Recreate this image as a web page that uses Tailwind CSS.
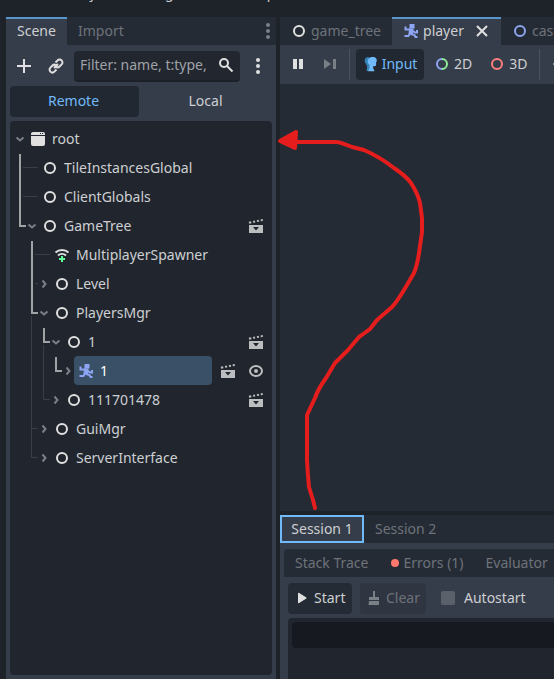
<!DOCTYPE html>
<html lang="en">
<head>
<meta charset="utf-8">
<title>Scene editor</title>
<script src="https://cdn.jsdelivr.net/npm/@tailwindcss/browser@4"></script>
</head>
<body class="relative flex h-screen flex-col overflow-hidden bg-[#1e2229] font-['Noto_Sans',sans-serif] text-sm leading-5 text-[#cdcfd2]">
<svg width="0" height="0" class="absolute" aria-hidden="true">
  <defs>
    <symbol id="node" viewBox="0 0 16 16"><circle cx="8" cy="8" r="5" fill="none" stroke="currentColor" stroke-width="2"/></symbol>
    <symbol id="down" viewBox="0 0 12 12"><path d="M2.500 4.500 6 7.500 9.500 4.500" fill="none" stroke="currentColor" stroke-width="2"/></symbol>
    <symbol id="right" viewBox="0 0 12 12"><path d="M4.500 2.500 7.500 6 4.500 9.500" fill="none" stroke="currentColor" stroke-width="2"/></symbol>
    <symbol id="body" viewBox="0 0 16 16"><path d="M6.500 1h5v4.500h-5z" fill="currentColor"/><path d="M2.500 3.500v3H8M10 8l2 1.500h2V7M8 11l3.500 1 1 2h2M7 10.500 5.500 13H1.500" fill="none" stroke="currentColor" stroke-width="2"/><path d="M6 5.500h4.500V9L9.500 12 5.500 11z" fill="currentColor"/></symbol>
    <symbol id="clap" viewBox="0 0 16 16"><path d="M1 7h14v8H1z" fill="currentColor"/><path d="M5 9h6l-3 3.500z" fill="#21262e"/><path d="M.7 3.800 3 3.300l.5 1.900-2.300.5zM4.800 2.900l2-.4.5 1.900-2 .4zM8.700 2.200l2-.4.5 1.900-2 .4zM12.500 1.500l2.300-.4V3l-1.900.3z" fill="currentColor"/></symbol>
    <symbol id="dots" viewBox="0 0 16 16"><g fill="currentColor"><circle cx="8" cy="2" r="2"/><circle cx="8" cy="8" r="2"/><circle cx="8" cy="14" r="2"/></g></symbol>
  </defs>
</svg>

<header class="flex h-[17px] shrink-0 items-end overflow-hidden">
  <nav class="flex gap-4 pb-[14px] pl-[13px] leading-5" aria-label="Main menu">
    <button>Scene</button><button>Project</button><button>Debug</button><button>Editor</button><button>Help</button>
  </nav>
</header>

<div class="flex min-h-0 flex-1 gap-1 pl-1.5">
  <aside class="flex w-[270px] shrink-0 flex-col bg-[#363d4a] pb-1">
    <div class="flex h-7 shrink-0 items-stretch bg-[#252b34]" role="tablist">
      <button role="tab" aria-selected="true" class="w-[61px] border-t-2 border-[#5795cb] bg-[#363d4a] pb-0.5">Scene</button>
      <button role="tab" class="px-[11px] text-[#6d727b]">Import</button>
      <button aria-label="Dock options" class="ml-auto text-[#7b7f86]"><svg class="h-4 w-4"><use href="#dots"/></svg></button>
    </div>
    <div class="flex shrink-0 items-center px-2.5 pt-1.5">
      <button aria-label="Add node" class="pb-0.5"><svg class="h-4 w-4" viewBox="0 0 16 16"><path d="M8 1v14M1 8h14" stroke="#e0e0e0" stroke-width="2"/></svg></button>
      <button aria-label="Instance scene" class="ml-4 pb-0.5"><svg class="h-4 w-4" viewBox="0 0 16 16" fill="none" stroke="#e0e0e0" stroke-width="2"><path d="M7.500 4.500 9.600 2.400a2.800 2.800 0 0 1 4 4L11.500 8.500c-1 1-2.600 1-3.600 0M8.500 11.500l-2.100 2.100a2.800 2.800 0 0 1-4-4L4.500 7.500c1-1 2.600-1 3.600 0M6 10l4-4"/></svg></button>
      <label class="ml-2.5 flex h-[31px] min-w-0 flex-1 items-center rounded-sm border-b-2 border-[#1c2129] bg-[#22272f] px-1.5 pb-px">
        <input type="text" aria-label="Filter nodes" placeholder="Filter: name, t:type," class="w-0 min-w-0 flex-1 bg-transparent outline-none placeholder:text-[#9fa2a7]">
        <svg class="ml-1 h-4 w-4" viewBox="0 0 16 16" fill="none" stroke="#e0e0e0" stroke-width="2"><circle cx="6" cy="6" r="4"/><path d="m9 9 5.500 5.500"/></svg>
      </label>
      <button aria-label="More options" class="ml-2.5 pb-0.5 text-[#e0e0e0]"><svg class="h-4 w-4"><use href="#dots"/></svg></button>
    </div>
    <div class="mx-1 mt-1 grid h-[31px] shrink-0 grid-cols-2 [&>button]:pb-0.5 [&>button]:pr-0.5">
      <button class="mr-0.5 rounded-sm bg-[#222831] text-[#70bafa]">Remote</button>
      <button>Local</button>
    </div>
    <div class="relative mx-1 mt-1 min-h-0 flex-1 rounded-sm bg-[#21262e] py-[3px]">
      <svg class="pointer-events-none absolute top-0 left-0 h-[350px] w-16" viewBox="0 1 64 350" fill="none" aria-hidden="true">
        <g stroke="#393f47"><path d="M13 47.500h15M13 76.500h15M25 134.500h15M25 163.500h3M21.500 196v141.500H28M21.500 308.500H28M33.500 225v54.500H40"/></g>
        <g stroke="#a0a2a6" stroke-width="2"><path d="M10 34v72h6M22 121v72h6M34 208v14h6M46 237v14h6"/></g>
      </svg>
      <ul role="tree" class="[&>li]:flex [&>li]:h-[29px] [&>li]:items-center [&>li]:pr-2">
        <li class="pl-1"><svg class="h-3 w-3 text-[#7b7f86]"><use href="#down"/></svg><svg class="mr-1.5 ml-1 h-4 w-4" viewBox="0 0 16 16"><path d="M3 1h10a2 2 0 0 1 2 2v1H1V3a2 2 0 0 1 2-2zM1 5h14v8a2 2 0 0 1-2 2H3a2 2 0 0 1-2-2z" fill="#e0e0e0"/><path d="M12 2h1v1h-1zM10 2h1v1h-1z" fill="#21262e"/></svg>root</li>
        <li class="pl-8"><svg class="mr-1.5 h-4 w-4 text-[#e0e0e0]"><use href="#node"/></svg>TileInstancesGlobal</li>
        <li class="pl-8"><svg class="mr-1.5 h-4 w-4 text-[#e0e0e0]"><use href="#node"/></svg>ClientGlobals</li>
        <li class="pl-4"><svg class="h-3 w-3 text-[#7b7f86]"><use href="#down"/></svg><svg class="mr-1.5 ml-1 h-4 w-4 text-[#e0e0e0]"><use href="#node"/></svg>GameTree<button aria-label="Open scene" class="ml-auto text-[#bcbdbf]"><svg class="h-4 w-4"><use href="#clap"/></svg></button></li>
        <li class="pl-11"><svg class="mr-1.5 h-4 w-4" viewBox="0 0 16 16" fill="none" stroke="#e0e0e0" stroke-width="2"><path d="M1.500 5.500a9.500 9.500 0 0 1 13 0M4 8.500a6 6 0 0 1 8 0"/><path d="M8 9v6M5 12h6" stroke="#5fff97"/></svg>MultiplayerSpawner</li>
        <li class="pl-7"><svg class="h-3 w-3 text-[#7b7f86]"><use href="#right"/></svg><svg class="mr-1.5 ml-1 h-4 w-4 text-[#e0e0e0]"><use href="#node"/></svg>Level</li>
        <li class="pl-7"><svg class="h-3 w-3 text-[#7b7f86]"><use href="#down"/></svg><svg class="mr-1.5 ml-1 h-4 w-4 text-[#e0e0e0]"><use href="#node"/></svg>PlayersMgr</li>
        <li class="pl-10"><svg class="h-3 w-3 text-[#7b7f86]"><use href="#down"/></svg><svg class="mr-1.5 ml-1 h-4 w-4 text-[#e0e0e0]"><use href="#node"/></svg>1<button aria-label="Open scene" class="ml-auto text-[#bcbdbf]"><svg class="h-4 w-4"><use href="#clap"/></svg></button></li>
        <li class="pl-[52px]" aria-selected="true"><svg class="h-3 w-3 text-[#7b7f86]"><use href="#right"/></svg><span class="mr-2 flex h-[29px] flex-1 items-center rounded-sm bg-[#395066] pl-1 text-white"><svg class="mr-1.5 h-4 w-4 text-[#8da5f3]"><use href="#body"/></svg>1</span><button aria-label="Open scene" class="mr-3 text-[#bcbdbf]"><svg class="h-4 w-4"><use href="#clap"/></svg></button><button aria-label="Toggle visibility"><svg class="h-4 w-4" viewBox="0 0 16 16"><ellipse cx="8" cy="8" rx="6" ry="5" fill="none" stroke="#bcbdbf" stroke-width="2"/><circle cx="8" cy="8" r="2" fill="#bcbdbf"/></svg></button></li>
        <li class="pl-10"><svg class="h-3 w-3 text-[#7b7f86]"><use href="#right"/></svg><svg class="mr-1.5 ml-1 h-4 w-4 text-[#e0e0e0]"><use href="#node"/></svg>111701478<button aria-label="Open scene" class="ml-auto text-[#bcbdbf]"><svg class="h-4 w-4"><use href="#clap"/></svg></button></li>
        <li class="pl-7"><svg class="h-3 w-3 text-[#7b7f86]"><use href="#right"/></svg><svg class="mr-1.5 ml-1 h-4 w-4 text-[#e0e0e0]"><use href="#node"/></svg>GuiMgr</li>
        <li class="pl-7"><svg class="h-3 w-3 text-[#7b7f86]"><use href="#right"/></svg><svg class="mr-1.5 ml-1 h-4 w-4 text-[#e0e0e0]"><use href="#node"/></svg>ServerInterface</li>
      </ul>
    </div>
  </aside>

  <main class="flex min-w-0 flex-1 flex-col">
    <div class="flex h-7 shrink-0 overflow-hidden whitespace-nowrap bg-[#252b34] text-[#6d727b]" role="tablist">
      <button role="tab" class="flex shrink-0 items-center gap-1 px-[11px]"><svg class="h-4 w-4 text-[#e0e0e0]"><use href="#node"/></svg>game_tree</button>
      <div class="flex shrink-0 items-center border-t-2 border-[#5795cb] bg-[#363d4a] px-[11px] pb-0.5 text-[#cdcfd2]"><button role="tab" aria-selected="true" class="flex items-center gap-1"><svg class="h-4 w-4 text-[#8da5f3]"><use href="#body"/></svg>player</button><button aria-label="Close tab" class="ml-2.5"><svg class="h-4 w-4" viewBox="0 0 16 16"><path d="m3 3 10 10M13 3 3 13" stroke="#e0e0e0" stroke-width="2"/></svg></button></div>
      <button role="tab" class="flex shrink-0 items-center gap-1 pl-[11px]"><svg class="h-4 w-4 text-[#8da5f3]"><use href="#node"/></svg>cast</button>
    </div>
    <div class="flex h-[39px] shrink-0 items-center overflow-hidden whitespace-nowrap bg-[#363d4a] pl-2.5">
      <button aria-label="Pause" class="pb-0.5"><svg class="h-4 w-4" viewBox="0 0 16 16"><path d="M3 3h4v10H3zM9 3h4v10H9z" fill="#e0e0e0"/></svg></button>
      <button aria-label="Next frame" class="ml-4 pb-0.5"><svg class="h-4 w-4" viewBox="0 0 16 16"><path d="M2 3v10l7-5zM11 3h3v10h-3z" fill="#7a7e86"/></svg></button>
      <span class="ml-[11px] h-[31px] w-px shrink-0 bg-[#4b515d]"></span>
      <button class="ml-1.5 flex h-[31px] w-[68px] shrink-0 items-center justify-center gap-[3px] rounded-sm bg-[#222831] pb-0.5 text-[#70bafa]"><svg class="h-4 w-4 shrink-0" viewBox="0 0 16 16"><path d="M6 1C3 1 1.200 3 1.800 5.500 2.200 7.500 3.500 8.500 4 10v2L3.500 15H7V8L5 5z" fill="#3583b4"/><path d="M9.500 1C12.500.8 14.200 3 13.800 5.500l-.7.500v2.500c0 1.500-1 1.800-3 1.800V12l1.500 3.200H5.200L6.500 12V9C4.500 7.500 4 5 5.300 3 6.200 1.500 7.800 1 9.500 1z" fill="#70bafa"/></svg>Input</button>
      <button class="ml-2.5 flex shrink-0 items-center gap-1 pb-0.5"><svg class="h-4 w-4" viewBox="0 0 16 16" fill="none" stroke-width="2"><path d="M8 3a5 5 0 0 0 0 10" stroke="#8da5f3"/><path d="M8 3a5 5 0 0 1 0 10" stroke="#8eef97"/></svg>2D</button>
      <button class="ml-[17px] flex shrink-0 items-center gap-1 pb-0.5"><svg class="h-4 w-4 text-[#fc7f7f]"><use href="#node"/></svg>3D</button>
      <span class="ml-3 h-[31px] w-px shrink-0 bg-[#4b515d]"></span>
      <button aria-label="Select mode" class="ml-3 shrink-0 pb-0.5"><svg class="h-4 w-4" viewBox="0 0 16 16"><path d="M1 8 4 5v6z" fill="#e0e0e0"/></svg></button>
    </div>
    <div class="min-h-0 flex-1 bg-[#252b34]"></div>
    <section class="mt-1 flex h-[164px] shrink-0 flex-col bg-[#363d4a]">
      <div class="flex h-7 shrink-0 bg-[#252b34]" role="tablist">
        <button role="tab" aria-selected="true" class="w-[84px] border-2 border-[#70bafa] bg-[#363d4a]">Session 1</button>
        <button role="tab" class="px-[11px] text-[#6d727b]">Session 2</button>
      </div>
      <div class="mt-1.5 ml-1 flex h-7 shrink-0 items-center gap-[22px] overflow-hidden whitespace-nowrap rounded-tl-sm bg-[#252b34] pl-[11px] text-[#6d727b]" role="tablist">
        <button role="tab" class="shrink-0">Stack Trace</button>
        <button role="tab" class="flex shrink-0 items-center gap-[5px]"><span class="h-2 w-2 rounded-full bg-[#ff786b]"></span>Errors (1)</button>
        <button role="tab" class="shrink-0">Evaluator</button>
      </div>
      <div class="mt-1.5 ml-2 flex h-[31px] shrink-0 items-center whitespace-nowrap">
        <button class="flex h-[31px] w-16 items-center gap-1 rounded-sm bg-[#252b34] pb-0.5 pl-1.5"><svg class="h-4 w-4" viewBox="0 0 16 16"><path d="M4 3.500c0-.8.500-1 1.200-.6L12 7.300c.6.400.6 1 0 1.400l-6.800 4.400c-.7.400-1.200.2-1.200-.6z" fill="#e0e0e0"/></svg>Start</button>
        <button disabled class="ml-2 flex h-[31px] w-[66px] items-center gap-1 rounded-sm bg-[#2f3541] pb-0.5 pl-1.5 text-[#6d727b]"><svg class="h-4 w-4" viewBox="0 0 16 16"><path d="M7 1h2v6h4v3H3V7h4zM3 11h10v4H2.500z" fill="#7b7f86"/></svg>Clear</button>
        <label class="ml-[15px] flex items-center gap-[9px] pb-0.5"><input type="checkbox" class="h-3.5 w-3.5 appearance-none rounded-xs bg-[#5b616a] checked:bg-[#70bafa]">Autostart</label>
      </div>
      <div class="mt-1 ml-2 flex-1 rounded-tl-sm bg-[#21262e] pt-1 pl-1"><div class="h-[26px] rounded-l-sm bg-[#161920]"></div></div>
    </section>
  </main>
</div>

<svg class="pointer-events-none absolute top-[110px] left-[270px] h-[410px] w-[180px]" viewBox="270 110 180 410" fill="none" stroke="#e51d1d" stroke-width="4" stroke-linecap="round" stroke-linejoin="round" aria-hidden="true">
  <path d="M296 142H336Q340 142 352 147L364 150Q380 157 394 168Q406 176 411 183Q418 194 420 203L422 218V232L419 253Q417 266 414 273L404 290Q396 303 392 307L377 320 370 329Q366 332 359 337L348 350 335 363 326 378Q318 389 315 398L307 415V460Q308 477 309 487L313 500 315 508"/>
  <path d="M280 141 296 132 295 148z" fill="#e51d1d"/>
</svg>
</body>
</html>
